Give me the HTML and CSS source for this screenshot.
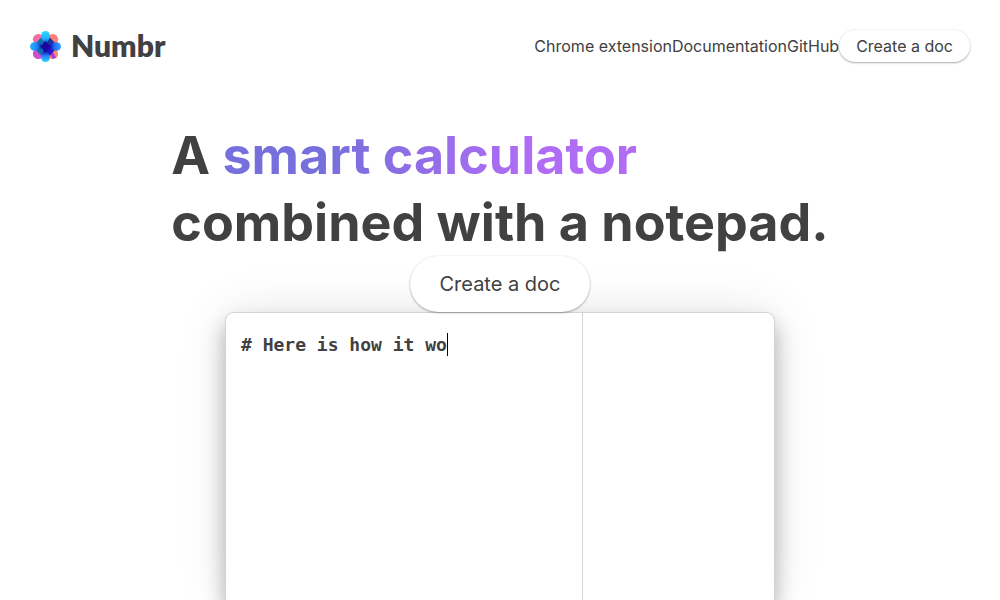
FILE: index.html
```html
<!DOCTYPE html>
<html lang="en">
<head>
<meta charset="utf-8">
<meta name="viewport" content="width=device-width, initial-scale=1">
<title>Numbr</title>
<link rel="stylesheet" href="styles.css">
</head>
<body>
<header class="header">
  <a class="brand" href="#">
    <svg class="brand-mark" viewBox="0 0 30 30" aria-hidden="true">
      <defs>
        <linearGradient id="v" x1="0" y1="0" x2="0" y2="1"><stop offset="0" stop-color="#2ddcff"/><stop offset=".25" stop-color="#1fb0ff"/><stop offset=".4" stop-color="#1530b8"/><stop offset=".65" stop-color="#1a10b0"/><stop offset=".8" stop-color="#2480f8"/><stop offset="1" stop-color="#25d5ff"/></linearGradient>
        <linearGradient id="h" x1="0" y1="0" x2="1" y2="0"><stop offset="0" stop-color="#2db4ff"/><stop offset=".22" stop-color="#1987f5"/><stop offset=".4" stop-color="#0c1f9c"/><stop offset=".65" stop-color="#1810b8"/><stop offset=".8" stop-color="#2470f5"/><stop offset="1" stop-color="#2ba8ff"/></linearGradient>
      </defs>
      <circle cx="8" cy="8" r="5.2" fill="#f36f9f"/>
      <circle cx="22" cy="8" r="5.2" fill="#ff8079"/>
      <circle cx="8" cy="22" r="5.2" fill="#cc51cf"/>
      <circle cx="22" cy="22" r="5.2" fill="#ff8b66"/>
      <path d="M17 19l3-2 5.4 8.6-3.4 1.6z" fill="#ab39df"/>
      <rect x="10.8" y="0" width="8.4" height="30" rx="4.2" fill="url(#v)"/>
      <rect x="0" y="10.8" width="30" height="8.4" rx="4.2" fill="url(#h)"/>
      <path d="M15 15L6.4 10.8 10.8 6.4zM15 15l-8.6 4.2 4.4 4.4z" fill="#0d6fb0"/>
      <path d="M15 15l4.2-8.6 4.4 4.4z" fill="#15349f"/>
      <path d="M15 15l8.6 4.2-4.4 4.4z" fill="#2712c9"/>
      <path d="M15 10l5 5-5 6-5-6z" fill="#1a079d"/>
    </svg>
    <span class="brand-name">Numbr</span>
  </a>
  <nav class="nav">
    <a class="nav-link" href="#">Chrome extension</a>
    <a class="nav-link" href="#">Documentation</a>
    <a class="nav-link" href="#">GitHub</a>
    <button class="pill" type="button">Create a doc</button>
  </nav>
</header>
<main class="hero">
  <h1 class="title">A <span class="accent">smart calculator</span><br>combined with a notepad.</h1>
  <button class="pill pill-large" type="button">Create a doc</button>
  <section class="editor" aria-label="Example document">
    <div class="source"><span class="typed"># Here is how it wo</span></div>
    <div class="results"></div>
  </section>
</main>
</body>
</html>
```
FILE: styles.css
```css
* { box-sizing: border-box; }
body {
  margin: 0;
  height: 100vh;
  overflow: hidden;
  background: #fff;
  color: #414042;
  font-family: Inter, "Liberation Sans", sans-serif;
  display: flex;
  flex-direction: column;
}
.header {
  display: flex;
  align-items: center;
  justify-content: space-between;
  padding: 30px;
}
.brand {
  display: flex;
  align-items: center;
  gap: 10px;
  color: inherit;
  text-decoration: none;
}
.brand-mark { width: 31px; height: 31px; }
.brand-name {
  font-family: Lato, sans-serif;
  font-size: 30px;
  font-weight: 800;
  line-height: 30px;
  padding-bottom: 2px;
}
.nav {
  display: flex;
  align-items: center;
  font-size: 16px;
}
.nav-link {
  color: inherit;
  text-decoration: none;
}
.pill {
  border: 0;
  border-radius: 28px;
  background: #fff;
  color: inherit;
  font: inherit;
  line-height: 20px;
  padding: 6px 17px;
  box-shadow: 0 1px 2px rgba(0, 0, 0, .3), 0 0 2px rgba(0, 0, 0, .1);
}
.pill-large {
  position: relative;
  z-index: 1;
  font-size: 20px;
  line-height: 24px;
  padding: 16px 29px;
}
.hero {
  flex: 1;
  display: flex;
  flex-direction: column;
  align-items: center;
  padding-top: 30px;
}
.title {
  margin: 0;
  font-size: 52px;
  font-weight: 700;
  line-height: 67px;
}
.accent {
  color: transparent;
  background: linear-gradient(90deg, #7770dc 25%, #b16cf5 75%);
  -webkit-background-clip: text;
  background-clip: text;
}
.editor {
  flex: 1;
  width: 55%;
  display: grid;
  grid-template-columns: 65% 35%;
  border: 1px solid #d4d4d4;
  border-bottom: 0;
  border-radius: 9px 9px 0 0;
  background: #fff;
  box-shadow: 0 12px 20px rgba(0, 0, 0, .28), 0 0 50px rgba(0, 0, 0, .1);
}
.source {
  padding: 20px 15px;
  font-family: "DejaVu Sans Mono", monospace;
  font-size: 18px;
  font-weight: 700;
  line-height: 23px;
}
.results {
  border-left: 1px solid #d4d4d4;
}
.typed {
  display: inline-block;
  border-right: 1px solid #000;
}
```
